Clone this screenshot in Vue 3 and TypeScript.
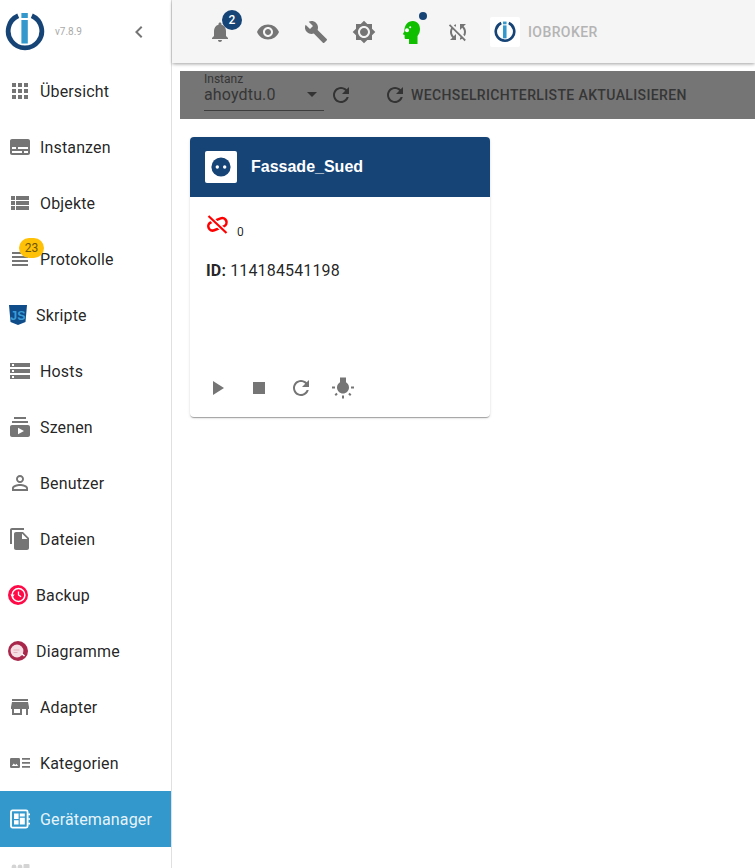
<script setup lang="ts">
interface NavItem {
  label: string
  path?: string
  kind?: string
  active?: boolean
}

const nav: NavItem[] = [
  { label: 'Übersicht', path: 'M4 8h4V4H4v4zm6 12h4v-4h-4v4zm-6 0h4v-4H4v4zm0-6h4v-4H4v4zm6 0h4v-4h-4v4zm6-10v4h4V4h-4zm-6 4h4V4h-4v4zm6 6h4v-4h-4v4zm0 6h4v-4h-4v4z' },
  { label: 'Instanzen', path: 'M20 4H4c-1.1 0-2 .9-2 2v12c0 1.1.9 2 2 2h16c1.1 0 2-.9 2-2V6c0-1.1-.9-2-2-2zM4 12h4v2H4v-2zm10 6H4v-2h10v2zm6 0h-4v-2h4v2zm0-4H10v-2h10v2z' },
  { label: 'Objekte', path: 'M3 14h4v-4H3v4zm0 5h4v-4H3v4zM3 9h4V5H3v4zm5 5h13v-4H8v4zm0 5h13v-4H8v4zM8 5v4h13V5H8z' },
  { label: 'Protokolle', kind: 'log', path: 'M4 15h16v-2H4v2zm0 4h16v-2H4v2zm0-8h16V9H4v2zm0-6v2h16V5H4z' },
  { label: 'Skripte', kind: 'js' },
  { label: 'Hosts', path: 'M2 20h20v-4H2v4zm2-3h2v2H4v-2zM2 4v4h20V4H2zm4 3H4V5h2v2zm-4 7h20v-4H2v4zm2-3h2v2H4v-2z' },
  { label: 'Szenen', path: 'M20 8H4V6h16v2zm-2-6H6v2h12V2zm4 10v8c0 1.1-.9 2-2 2H4c-1.1 0-2-.9-2-2v-8c0-1.1.9-2 2-2h16c1.1 0 2 .9 2 2zm-6 4l-6-3.27v6.53L16 16z' },
  { label: 'Benutzer', path: 'M12 5.9c1.16 0 2.1.94 2.1 2.1s-.94 2.1-2.1 2.1S9.9 9.16 9.9 8s.94-2.1 2.1-2.1m0 9c2.97 0 6.1 1.46 6.1 2.1v1.1H5.9V17c0-.64 3.13-2.1 6.1-2.1M12 4C9.79 4 8 5.79 8 8s1.79 4 4 4 4-1.79 4-4-1.79-4-4-4zm0 9c-2.67 0-8 1.34-8 4v3h16v-3c0-2.66-5.33-4-8-4z' },
  { label: 'Dateien', path: 'M16 1H4c-1.1 0-2 .9-2 2v14h2V3h12V1zm-1 4l6 6v10c0 1.1-.9 2-2 2H7.99C6.89 23 6 22.1 6 21l.01-14c0-1.1.89-2 1.99-2h7zm-1 7h5.5L14 6.5V12z' },
  { label: 'Backup', kind: 'backup' },
  { label: 'Diagramme', kind: 'charts' },
  { label: 'Adapter', path: 'M20 4H4v2h16V4zm1 10v-2l-1-5H4l-1 5v2h1v6h10v-6h4v6h2v-6h1zm-9 4H6v-4h6v4z' },
  { label: 'Kategorien', kind: 'cat' },
  { label: 'Gerätemanager', kind: 'dev', active: true },
  { label: '', kind: 'next' },
]

const isNarrow = (item: NavItem): boolean =>
  item.kind === 'js' || item.kind === 'backup' || item.kind === 'charts'

const refresh = 'M17.65 6.35C16.2 4.9 14.21 4 12 4c-4.42 0-7.99 3.58-7.99 8s3.57 8 7.99 8c3.73 0 6.84-2.55 7.73-6h-2.08c-.82 2.33-3.04 4-5.65 4-3.31 0-6-2.69-6-6s2.69-6 6-6c1.66 0 3.14.69 4.22 1.78L13 11h7V4l-2.35 2.35z'
</script>

<template>
  <div class="app">
    <aside class="side">
      <div class="brand">
        <svg class="logo" width="40" height="40" viewBox="0 0 40 40">
          <path d="M13.2 3.7A16.8 16.8 0 1 0 26.8 3.7" fill="none" stroke="#164477" stroke-width="4.8" />
          <rect x="16.4" y="1" width="6.4" height="5" fill="#3399cc" />
          <rect x="16.4" y="8" width="6.4" height="23.5" fill="#3399cc" />
        </svg>
        <span class="version">v7.8.9</span>
        <svg class="chev" width="24" height="24" viewBox="0 0 24 24"><path d="M15.41 7.41 14 6l-6 6 6 6 1.41-1.41L10.83 12z" /></svg>
      </div>
      <nav class="nav">
        <div v-for="item in nav" :key="item.label" class="item" :class="{ active: item.active }">
          <span class="ico" :class="{ narrow: isNarrow(item) }">
            <svg v-if="item.path" width="24" height="24" viewBox="0 0 24 24"><path :d="item.path" /></svg>
            <svg v-else-if="item.kind === 'js'" width="20" height="20" viewBox="0 0 20 20">
              <path d="M1 0h18l-1.500 17L10 20l-7.500-3z" fill="#0f4c8a" />
              <text x="10" y="14.500" text-anchor="middle" class="jstext">JS</text>
            </svg>
            <svg v-else-if="item.kind === 'backup'" width="20" height="20" viewBox="0 0 20 20">
              <circle cx="10" cy="10" r="10" fill="#ff0a47" />
              <circle cx="10.500" cy="10" r="6.400" fill="none" stroke="#fff" stroke-width="1.500" />
              <path d="M10.500 6.500V10l2.600 1.800" fill="none" stroke="#fff" stroke-width="1.300" />
              <path d="M2.400 9.500h4.200L4.500 12.400z" fill="#fff" />
            </svg>
            <svg v-else-if="item.kind === 'charts'" width="20" height="20" viewBox="0 0 20 20">
              <circle cx="10" cy="10" r="10" fill="#a8274a" />
              <circle cx="9" cy="10" r="6.400" fill="#f6dfe4" />
              <path d="M5.500 9h6M5.500 11.500h4" stroke="#e3aebb" stroke-width="1.200" />
              <path d="M13.500 12.500l3 2.500" stroke="#fff" stroke-width="1.600" />
            </svg>
            <svg v-else-if="item.kind === 'cat'" width="24" height="24" viewBox="0 0 24 24">
              <rect x="2" y="7" width="10" height="10" rx="1.200" />
              <path d="M3.800 15l2-2.600 1.400 1.500 1.200-1.200 1.800 2.300z" fill="#fff" />
              <path d="M14 7h8v1.800h-8zM14 11h8v1.800h-8zM14 15h8v1.800h-8z" />
            </svg>
            <svg v-else-if="item.kind === 'dev'" width="24" height="24" viewBox="0 0 24 24">
              <rect x="3" y="3.400" width="16.600" height="17.200" rx="1.500" fill="none" stroke="#fff" stroke-width="1.800" />
              <path d="M6 6.600h4.600v5.400H6zM11.800 6.600h5v3h-5zM11.800 10.800h5v6.600h-5zM6 13.200h4.600v4.200H6z" fill="#fff" />
              <path d="M20.200 6.600H22v1.600h-1.800zM20.200 11.200H22v1.600h-1.800zM20.200 15.800H22v1.600h-1.800z" fill="#fff" />
            </svg>
            <svg v-else width="24" height="24" viewBox="0 0 24 24" class="faint">
              <circle cx="6" cy="4" r="2.400" /><circle cx="12" cy="4" r="2.400" />
              <rect x="15.500" y="1" width="6" height="10" rx="1" />
            </svg>
          </span>
          <span class="label">{{ item.label }}</span>
          <span v-if="item.kind === 'log'" class="count">23</span>
        </div>
      </nav>
    </aside>

    <main class="main">
      <header class="bar">
        <div class="btn">
          <svg width="24" height="24" viewBox="0 0 24 24"><path d="M12 22c1.1 0 2-.9 2-2h-4c0 1.1.89 2 2 2zm6-6v-5c0-3.07-1.64-5.64-4.5-6.32V4c0-.83-.67-1.5-1.5-1.5s-1.5.67-1.5 1.5v.68C7.63 5.36 6 7.92 6 11v5l-2 2v1h16v-1l-2-2z" /></svg>
          <span class="bell-badge">2</span>
        </div>
        <div class="btn"><svg width="24" height="24" viewBox="0 0 24 24"><path d="M12 4.5C7 4.5 2.73 7.61 1 12c1.73 4.39 6 7.5 11 7.5s9.27-3.11 11-7.5c-1.73-4.39-6-7.5-11-7.5zM12 17c-2.76 0-5-2.24-5-5s2.24-5 5-5 5 2.24 5 5-2.24 5-5 5zm0-8c-1.66 0-3 1.34-3 3s1.34 3 3 3 3-1.34 3-3-1.34-3-3-3z" /></svg></div>
        <div class="btn"><svg width="24" height="24" viewBox="0 0 24 24"><path d="M22.7 19l-9.1-9.1c.9-2.3.4-5-1.5-6.9-2-2-5-2.4-7.4-1.3L9 6 6 9 1.6 4.7C.4 7.1.9 10.1 2.9 12.1c1.9 1.9 4.6 2.4 6.9 1.5l9.1 9.1c.4.4 1 .4 1.4 0l2.3-2.3c.5-.4.5-1.1.1-1.4z" /></svg></div>
        <div class="btn"><svg width="24" height="24" viewBox="0 0 24 24"><path d="M20 8.69V4h-4.69L12 .69 8.69 4H4v4.69L.69 12 4 15.31V20h4.69L12 23.31 15.31 20H20v-4.69L23.31 12 20 8.69zM12 18c-3.31 0-6-2.69-6-6s2.69-6 6-6 6 2.69 6 6-2.69 6-6 6zm0-10c-2.21 0-4 1.79-4 4s1.79 4 4 4 4-1.79 4-4-1.79-4-4-4z" /></svg></div>
        <div class="btn head">
          <svg width="24" height="24" viewBox="0 0 24 24">
            <path d="M10 24v-5H7c-.9 0-1.400-.6-1.400-1.300V15L3.800 14.200 5.400 11.300C5.200 5 9 1 13.800 1 18.400 1 21 4.800 21 9c0 3-1 5-2.500 7v8z" fill="#10c000" />
            <circle cx="8" cy="10.300" r="2" fill="#fff" />
            <circle cx="11.200" cy="7.200" r="1" fill="#fff" />
          </svg>
          <span class="dot"></span>
        </div>
        <div class="btn sync"><svg width="24" height="24" viewBox="0 0 24 24"><path d="M10 6.350V4.260c-.8.210-1.550.540-2.230.960l1.460 1.460c.250-.120.500-.240.770-.330zm-7.140-.940l2.360 2.360C4.450 8.990 4 10.440 4 12c0 2.210.910 4.200 2.360 5.640L4 20h6v-6l-2.240 2.240C6.680 15.150 6 13.660 6 12c0-1 .250-1.940.680-2.770l8.080 8.080c-.250.130-.500.250-.770.340v2.090c.8-.210 1.550-.540 2.230-.960l2.360 2.360 1.270-1.270L4.140 4.140 2.860 5.410zM20 4h-6v6l2.240-2.240C17.320 8.850 18 10.340 18 12c0 1-.250 1.940-.680 2.770l1.460 1.460C19.550 15.010 20 13.560 20 12c0-2.210-.910-4.200-2.360-5.640L20 4z" /></svg></div>
        <div class="host-logo">
          <svg width="22" height="22" viewBox="0 0 40 40">
            <path d="M13.200 3.700A16.800 16.800 0 1 0 26.800 3.700" fill="none" stroke="#164477" stroke-width="4.800" />
            <rect x="16.400" y="1" width="6.400" height="5" fill="#3399cc" />
            <rect x="16.400" y="8" width="6.400" height="23.500" fill="#3399cc" />
          </svg>
        </div>
        <span class="host-name">IOBROKER</span>
      </header>

      <div class="content">
        <section class="tools">
          <div class="select">
            <span class="sel-label">Instanz</span>
            <span class="sel-value">ahoydtu.0</span>
            <span class="sel-arrow"></span>
          </div>
          <svg class="tool-ref" width="24" height="24" viewBox="0 0 24 24"><path :d="refresh" /></svg>
          <svg class="tool-ref2" width="24" height="24" viewBox="0 0 24 24"><path :d="refresh" /></svg>
          <span class="tool-text">Wechselrichterliste aktualisieren</span>
        </section>

        <article class="card">
          <div class="card-head">
            <span class="card-ico">
              <svg width="24" height="24" viewBox="0 0 24 24">
                <circle cx="12" cy="12" r="9.600" fill="#164477" />
                <circle cx="8.300" cy="12" r="1.700" fill="#fff" />
                <circle cx="15.700" cy="12" r="1.700" fill="#fff" />
              </svg>
            </span>
            <span class="card-title">Fassade_Sued</span>
          </div>
          <div class="card-body">
            <div class="status">
              <svg class="unlink" width="24" height="24" viewBox="0 0 24 24">
                <rect x="3" y="7" width="19" height="8.600" rx="4.300" transform="rotate(-22 12.500 11.500)" />
                <path class="cut" d="M3.500 3l18 17" />
                <path class="slash" d="M3.500 3l18 17" />
              </svg>
              <span class="status-num">0</span>
            </div>
            <p class="ident"><b>ID:</b> 114184541198</p>
          </div>
          <div class="actions">
            <svg width="24" height="24" viewBox="0 0 24 24"><path d="M8 5v14l11-7z" /></svg>
            <svg width="24" height="24" viewBox="0 0 24 24"><path d="M6 6h12v12H6z" /></svg>
            <svg width="24" height="24" viewBox="0 0 24 24"><path :d="refresh" /></svg>
            <svg width="24" height="24" viewBox="0 0 24 24"><path d="M3.550 18.540l1.410 1.410 1.790-1.800-1.410-1.410-1.790 1.800zM11 22.450h2V19.500h-2v2.950zM4 10.500H1v2h3v-2zm11-4.190V1.500H9v4.810C7.210 7.350 6 9.280 6 11.500c0 3.310 2.690 6 6 6s6-2.690 6-6c0-2.220-1.210-4.150-3-5.190zm5 4.190v2h3v-2h-3zm-2.760 7.660l1.790 1.800 1.410-1.410-1.800-1.790-1.400 1.400z" /></svg>
          </div>
        </article>
      </div>
    </main>
  </div>
</template>

<style scoped>
.app {
  display: flex;
  height: 868px;
  overflow: hidden;
  background: #fff;
  font-family: Roboto, "Liberation Sans", sans-serif;
  color: rgba(0, 0, 0, 0.87);
}
.side {
  flex: 0 0 172px;
  box-sizing: border-box;
  border-right: 1px solid #e0e0e0;
  background: #fff;
}
.brand {
  display: flex;
  align-items: center;
  height: 63px;
  padding-left: 5px;
}
.logo {
  flex: none;
}
.version {
  margin-left: 10px;
  font-size: 10px;
  color: #aaa;
}
.chev {
  margin-left: 45px;
  fill: #757575;
}
.item {
  position: relative;
  display: flex;
  align-items: center;
  height: 56px;
  padding-left: 8px;
  font-size: 16px;
  letter-spacing: 0.15px;
}
.item.active {
  background: #3399cc;
  color: rgba(255, 255, 255, 0.9);
}
.ico {
  display: flex;
  align-items: center;
  justify-content: center;
  width: 24px;
  height: 24px;
  margin-right: 8px;
}
.ico.narrow {
  width: 20px;
}
.ico svg {
  fill: #757575;
}
.faint {
  opacity: 0.3;
}
.jstext {
  font-family: "Liberation Sans", sans-serif;
  font-size: 12.5px;
  font-weight: 700;
  letter-spacing: 0;
  fill: #3a9bd5;
}
.count {
  position: absolute;
  left: 19px;
  top: 7px;
  display: flex;
  align-items: center;
  justify-content: center;
  width: 25px;
  height: 20px;
  border-radius: 10px;
  background: #ffc107;
  font-size: 12px;
  letter-spacing: 0;
  color: #6e5500;
}
.main {
  flex: 1;
  min-width: 0;
  display: flex;
  flex-direction: column;
}
.bar {
  position: relative;
  display: flex;
  align-items: center;
  flex: none;
  height: 63px;
  padding-left: 24px;
  background: #f5f5f5;
  box-shadow: 0 2px 4px -1px rgba(0, 0, 0, 0.2), 0 1px 3px rgba(0, 0, 0, 0.2);
}
.btn {
  position: relative;
  display: flex;
  align-items: center;
  justify-content: center;
  width: 48px;
  height: 48px;
}
.btn svg {
  fill: #757575;
}
.btn.head {
  width: 46px;
}
.bell-badge {
  position: absolute;
  left: 26px;
  top: 2px;
  display: flex;
  align-items: center;
  justify-content: center;
  width: 20px;
  height: 20px;
  border-radius: 50%;
  background: #164477;
  color: #fff;
  font-size: 12px;
  font-weight: 500;
}
.dot {
  position: absolute;
  left: 31px;
  top: 4px;
  width: 8px;
  height: 8px;
  border-radius: 50%;
  background: #164477;
}
.host-logo {
  display: flex;
  align-items: center;
  justify-content: center;
  width: 30px;
  height: 30px;
  margin-left: 8px;
  background: #fff;
  border-radius: 2px;
}
.host-name {
  margin-left: 8px;
  font-size: 14px;
  font-weight: 500;
  letter-spacing: 0.4px;
  color: #b4b4b4;
}
.content {
  flex: 1;
  padding: 8px 0 0 8px;
}
.tools {
  display: flex;
  align-items: center;
  height: 48px;
  padding-left: 24px;
  background: #757575;
  color: #363636;
}
.tools svg {
  fill: #333;
}
.select {
  position: relative;
  box-sizing: border-box;
  width: 120px;
  height: 40px;
  border-bottom: 1px solid #3d3d3d;
  align-self: flex-start;
}
.sel-label {
  position: absolute;
  left: 0;
  top: 1px;
  font-size: 12px;
  line-height: 14px;
}
.sel-value {
  position: absolute;
  left: 0;
  top: 14px;
  font-size: 16px;
  line-height: 19px;
  letter-spacing: 0.15px;
}
.sel-arrow {
  position: absolute;
  right: 7px;
  top: 21px;
  border-left: 5px solid transparent;
  border-right: 5px solid transparent;
  border-top: 5px solid #333;
}
.tool-ref {
  margin-left: 5px;
}
.tool-ref2 {
  margin-left: 30px;
}
.tool-text {
  margin-left: 4px;
  font-size: 14px;
  font-weight: 500;
  letter-spacing: 0.37px;
  text-transform: uppercase;
}
.card {
  display: flex;
  flex-direction: column;
  box-sizing: border-box;
  width: 300px;
  height: 280px;
  margin: 18px 0 0 10px;
  border-radius: 4px;
  overflow: hidden;
  background: #fff;
  box-shadow: 0 2px 1px -1px rgba(0, 0, 0, 0.2), 0 1px 1px rgba(0, 0, 0, 0.14), 0 1px 3px rgba(0, 0, 0, 0.12);
}
.card-head {
  display: flex;
  align-items: center;
  flex: none;
  height: 60px;
  padding-left: 15px;
  background: #164477;
}
.card-ico {
  display: flex;
  align-items: center;
  justify-content: center;
  width: 32px;
  height: 32px;
  background: #fff;
  border-radius: 2px;
}
.card-title {
  margin-left: 14px;
  font-family: "Liberation Sans", sans-serif;
  font-size: 16px;
  font-weight: 700;
  color: #fff;
}
.card-body {
  flex: 1;
  padding: 16px 16px 0;
}
.status {
  position: relative;
  height: 24px;
}
.unlink {
  display: block;
  margin-left: -1px;
  fill: none;
}
.unlink rect {
  stroke: #f00;
  stroke-width: 2.6;
}
.unlink .cut {
  stroke: #fff;
  stroke-width: 5;
}
.unlink .slash {
  stroke: #f00;
  stroke-width: 2.2;
}
.status-num {
  position: absolute;
  left: 31px;
  top: 12px;
  font-size: 12px;
  line-height: 14px;
}
.ident {
  margin: 24px 0 0;
  font-size: 16px;
  line-height: 20px;
  letter-spacing: 0.15px;
}
.actions {
  display: flex;
  gap: 18px;
  flex: none;
  height: 58px;
  padding: 17px 0 0 15px;
  box-sizing: border-box;
}
.actions svg {
  fill: #757575;
}
</style>

<style>
body {
  margin: 0;
}
</style>
